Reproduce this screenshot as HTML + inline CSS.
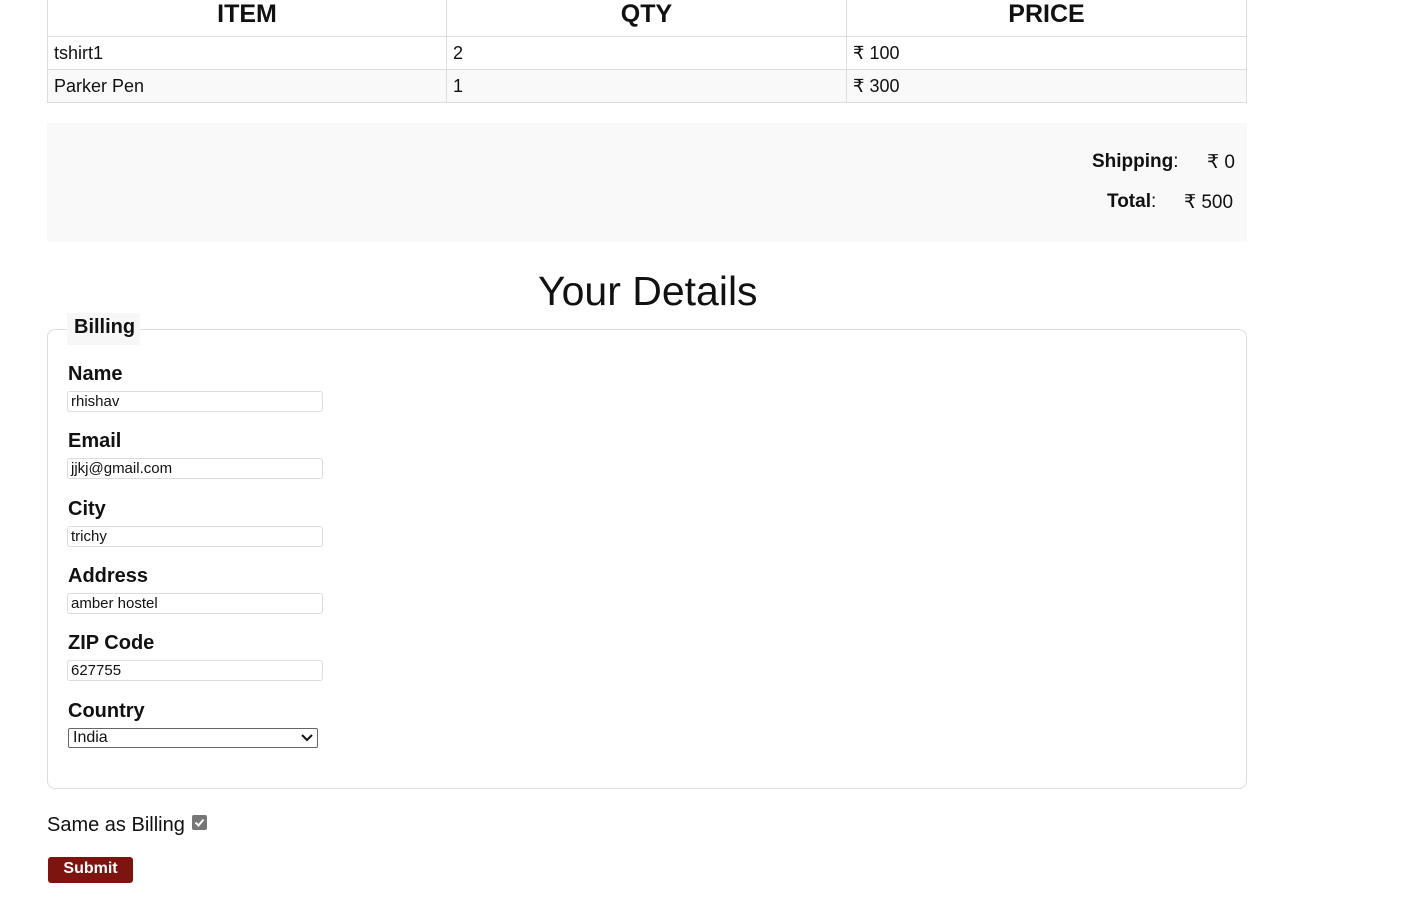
<!DOCTYPE html>
<html><head><meta charset="utf-8"><style>
*{box-sizing:border-box;margin:0;padding:0}
body{width:1407px;height:901px;background:#fff;font-family:"Liberation Sans","DejaVu Sans",sans-serif;color:#111;position:relative;overflow:hidden}
.a{position:absolute;white-space:nowrap}
table{position:absolute;left:47px;top:-9px;width:1200px;border-collapse:collapse}
td,th{border:1px solid #ddd;height:33px;font-size:18px;padding:0 6px;text-align:left}
th{font-size:25px;text-align:center;height:45px;font-weight:bold}
tr.g td{background:#f9f9f9}
.lbl{font-size:20px;font-weight:bold;left:68px}
.in{left:67px;width:256px;height:21px;border:1px solid #ddd;border-radius:3px;font-size:15px;padding-left:3px;line-height:19px}
</style></head><body>
<table>
<tr><th style="width:399px">ITEM</th><th style="width:400px">QTY</th><th>PRICE</th></tr>
<tr><td>tshirt1</td><td>2</td><td>₹ 100</td></tr>
<tr class="g"><td>Parker Pen</td><td>1</td><td>₹ 300</td></tr>
</table>
<div class="a" style="left:47px;top:123px;width:1200px;height:119px;background:#f9f9f9"></div>
<div class="a" style="left:1092px;top:151px;font-size:19px"><b>Shipping</b>:</div>
<div class="a" style="left:1207px;top:151px;font-size:19px">₹ 0</div>
<div class="a" style="left:1107px;top:191px;font-size:19px"><b>Total</b>:</div>
<div class="a" style="left:1184px;top:191px;font-size:19px">₹ 500</div>
<div class="a" style="left:538px;top:268px;font-size:41px;">Your Details</div>
<div class="a" style="left:47px;top:329px;width:1200px;height:460px;border:1px solid #ddd;border-radius:8px"></div>
<div class="a" style="left:67px;top:313px;width:73px;height:32px;background:#f7f7f7;font-size:20px;font-weight:bold;padding:3px 0 0 7px">Billing</div>
<div class="a lbl" style="top:363px">Name</div><div class="a in" style="top:391px">rhishav</div>
<div class="a lbl" style="top:430px">Email</div><div class="a in" style="top:458px">jjkj@gmail.com</div>
<div class="a lbl" style="top:498px">City</div><div class="a in" style="top:526px">trichy</div>
<div class="a lbl" style="top:565px">Address</div><div class="a in" style="top:593px">amber hostel</div>
<div class="a lbl" style="top:632px">ZIP Code</div><div class="a in" style="top:660px">627755</div>
<div class="a lbl" style="top:700px">Country</div>
<div class="a" style="left:68px;top:728px;width:250px;height:20px;border:1px solid #666;border-radius:2px;font-size:16px;padding-left:4px;line-height:18px">India
<svg style="position:absolute;right:4px;top:5px" width="12" height="8" viewBox="0 0 12 8"><path d="M1 1l5 5 5-5" stroke="#111" stroke-width="2" fill="none"/></svg></div>
<div class="a" style="left:47px;top:814px;font-size:20px">Same as Billing</div>
<div class="a" style="left:192px;top:815px;width:15px;height:15px;background:#767676;border-radius:2px"><svg width="15" height="15" viewBox="0 0 15 15"><path d="M3.5 7.5l3 3 5-6" stroke="#fff" stroke-width="2" fill="none"/></svg></div>
<div class="a" style="left:48px;top:857px;width:85px;height:26px;background:#7d1410;border-radius:3px;color:#fff;font-size:16px;font-weight:bold;text-align:center;line-height:24px">Submit</div>
</body></html>
